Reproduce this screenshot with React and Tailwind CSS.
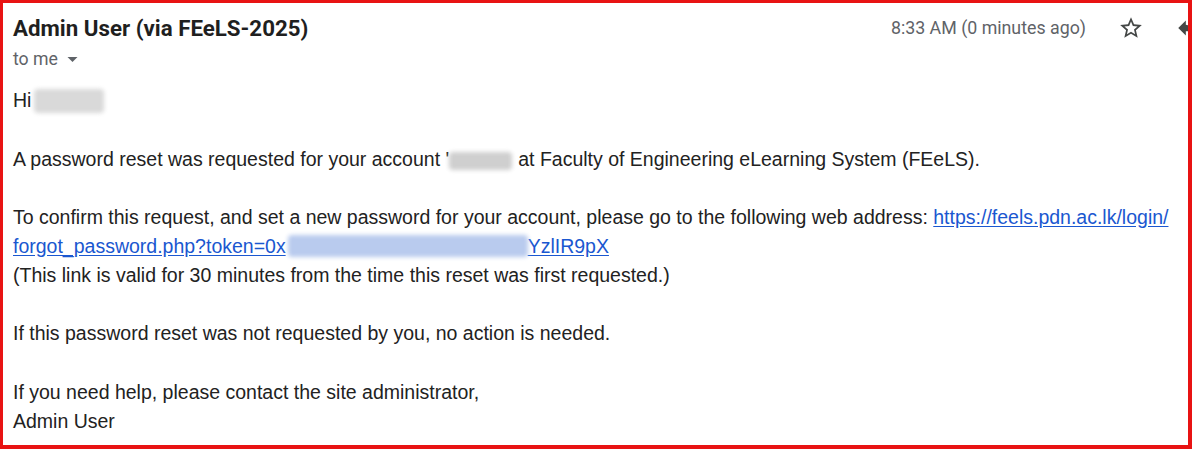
import { useState } from 'react'

function Blur({ className }) {
  return <span className={`inline-block align-middle rounded-sm blur-[2px] ${className}`} />
}

export default function App() {
  const [starred, setStarred] = useState(false)

  return (
    <div className="w-[1192px] h-[449px] bg-white border-[#e81313] border-t-[3px] border-l-[3px] border-r-[4px] border-b-[4px] overflow-hidden">
      <div className="pl-[10px] pr-0">
        {/* header */}
        <div className="flex items-center justify-between h-[28px] mt-[11px]">
          <div className="font-['Roboto',sans-serif] font-bold text-[22.3px] leading-[28px] text-[#1f1f1f]">
            Admin User (via FEeLS-2025)
          </div>
          <div className="flex items-center">
            <span className="font-['Roboto',sans-serif] text-[17.8px] leading-[24px] text-[#5f6368] mr-[32px]">
              8:33 AM (0 minutes ago)
            </span>
            <button onClick={() => setStarred(!starred)} className="w-[26px] h-[26px] text-[#444746] mr-[31px] shrink-0">
              <svg viewBox="0 0 24 24" className="w-[26px] h-[26px]" fill="currentColor">
                {starred ? (
                  <path d="M12 17.27L18.18 21l-1.64-7.03L22 9.24l-7.19-.61L12 2 9.19 8.63 2 9.24l5.46 4.73L5.82 21z" />
                ) : (
                  <path d="M22 9.24l-7.19-.62L12 2 9.19 8.63 2 9.24l5.46 4.73L5.82 21 12 17.27 18.18 21l-1.63-7.03L22 9.24zM12 15.4l-3.76 2.27 1-4.28-3.32-2.88 4.38-.38L12 6.1l1.71 4.04 4.38.38-3.32 2.88 1 4.28L12 15.4z" />
                )}
              </svg>
            </button>
            <span className="w-[26px] h-[26px] text-[#444746] shrink-0 -mr-[13px]">
              <svg viewBox="0 0 24 24" className="w-[26px] h-[26px]" fill="currentColor">
                <path d="M10 9V5l-7 7 7 7v-4.1c5 0 8.5 1.6 11 5.1-1-5-4-10-11-11z" />
              </svg>
            </span>
          </div>
        </div>
        <div className="flex items-center font-['Roboto',sans-serif] text-[17.7px] leading-[22px] text-[#5f6368] mt-[6px]">
          to me
          <svg viewBox="0 0 10 5" className="w-[11px] h-[5px] ml-[9px] mt-[1px]" fill="#5f6368">
            <path d="M0 0l5 5 5-5z" />
          </svg>
        </div>

        {/* body */}
        <div className="font-['Liberation_Sans',Arial,sans-serif] text-[19.5px] leading-[29px] text-[#222222] mt-[16px] whitespace-nowrap">
          <div className="flex items-center">
            Hi
            <Blur className="ml-[3px] w-[70px] h-[24px] bg-[#d9d9d9]" />
          </div>
          <div className="h-[30px]" />
          <div className="flex items-center">
            A password reset was requested for your account '
            <Blur className="w-[63px] h-[18px] bg-[#cfcfcf] mr-[6px] mt-[2px]" />
            at Faculty of Engineering eLearning System (FEeLS).
          </div>
          <div className="h-[28.5px]" />
          <div>
            To confirm this request, and set a new password for your account, please go to the following web address:{' '}
            <a href="#" className="text-[#1a57d0] underline underline-offset-[2px]">https://feels.pdn.ac.lk/login/</a>
          </div>
          <div className="flex items-center">
            <a href="#" className="text-[#1a57d0] underline underline-offset-[2px]">forgot_password.php?token=0x</a>
            <Blur className="ml-[2px] w-[240px] h-[22px] bg-[#b9cbee]" />
            <a href="#" className="text-[#1a57d0] underline underline-offset-[2px]">YzlIR9pX</a>
          </div>
          <div>(This link is valid for 30 minutes from the time this reset was first requested.)</div>
          <div className="h-[29px]" />
          <div>If this password reset was not requested by you, no action is needed.</div>
          <div className="h-[30px]" />
          <div>If you need help, please contact the site administrator,</div>
          <div>Admin User</div>
        </div>
      </div>
    </div>
  )
}
